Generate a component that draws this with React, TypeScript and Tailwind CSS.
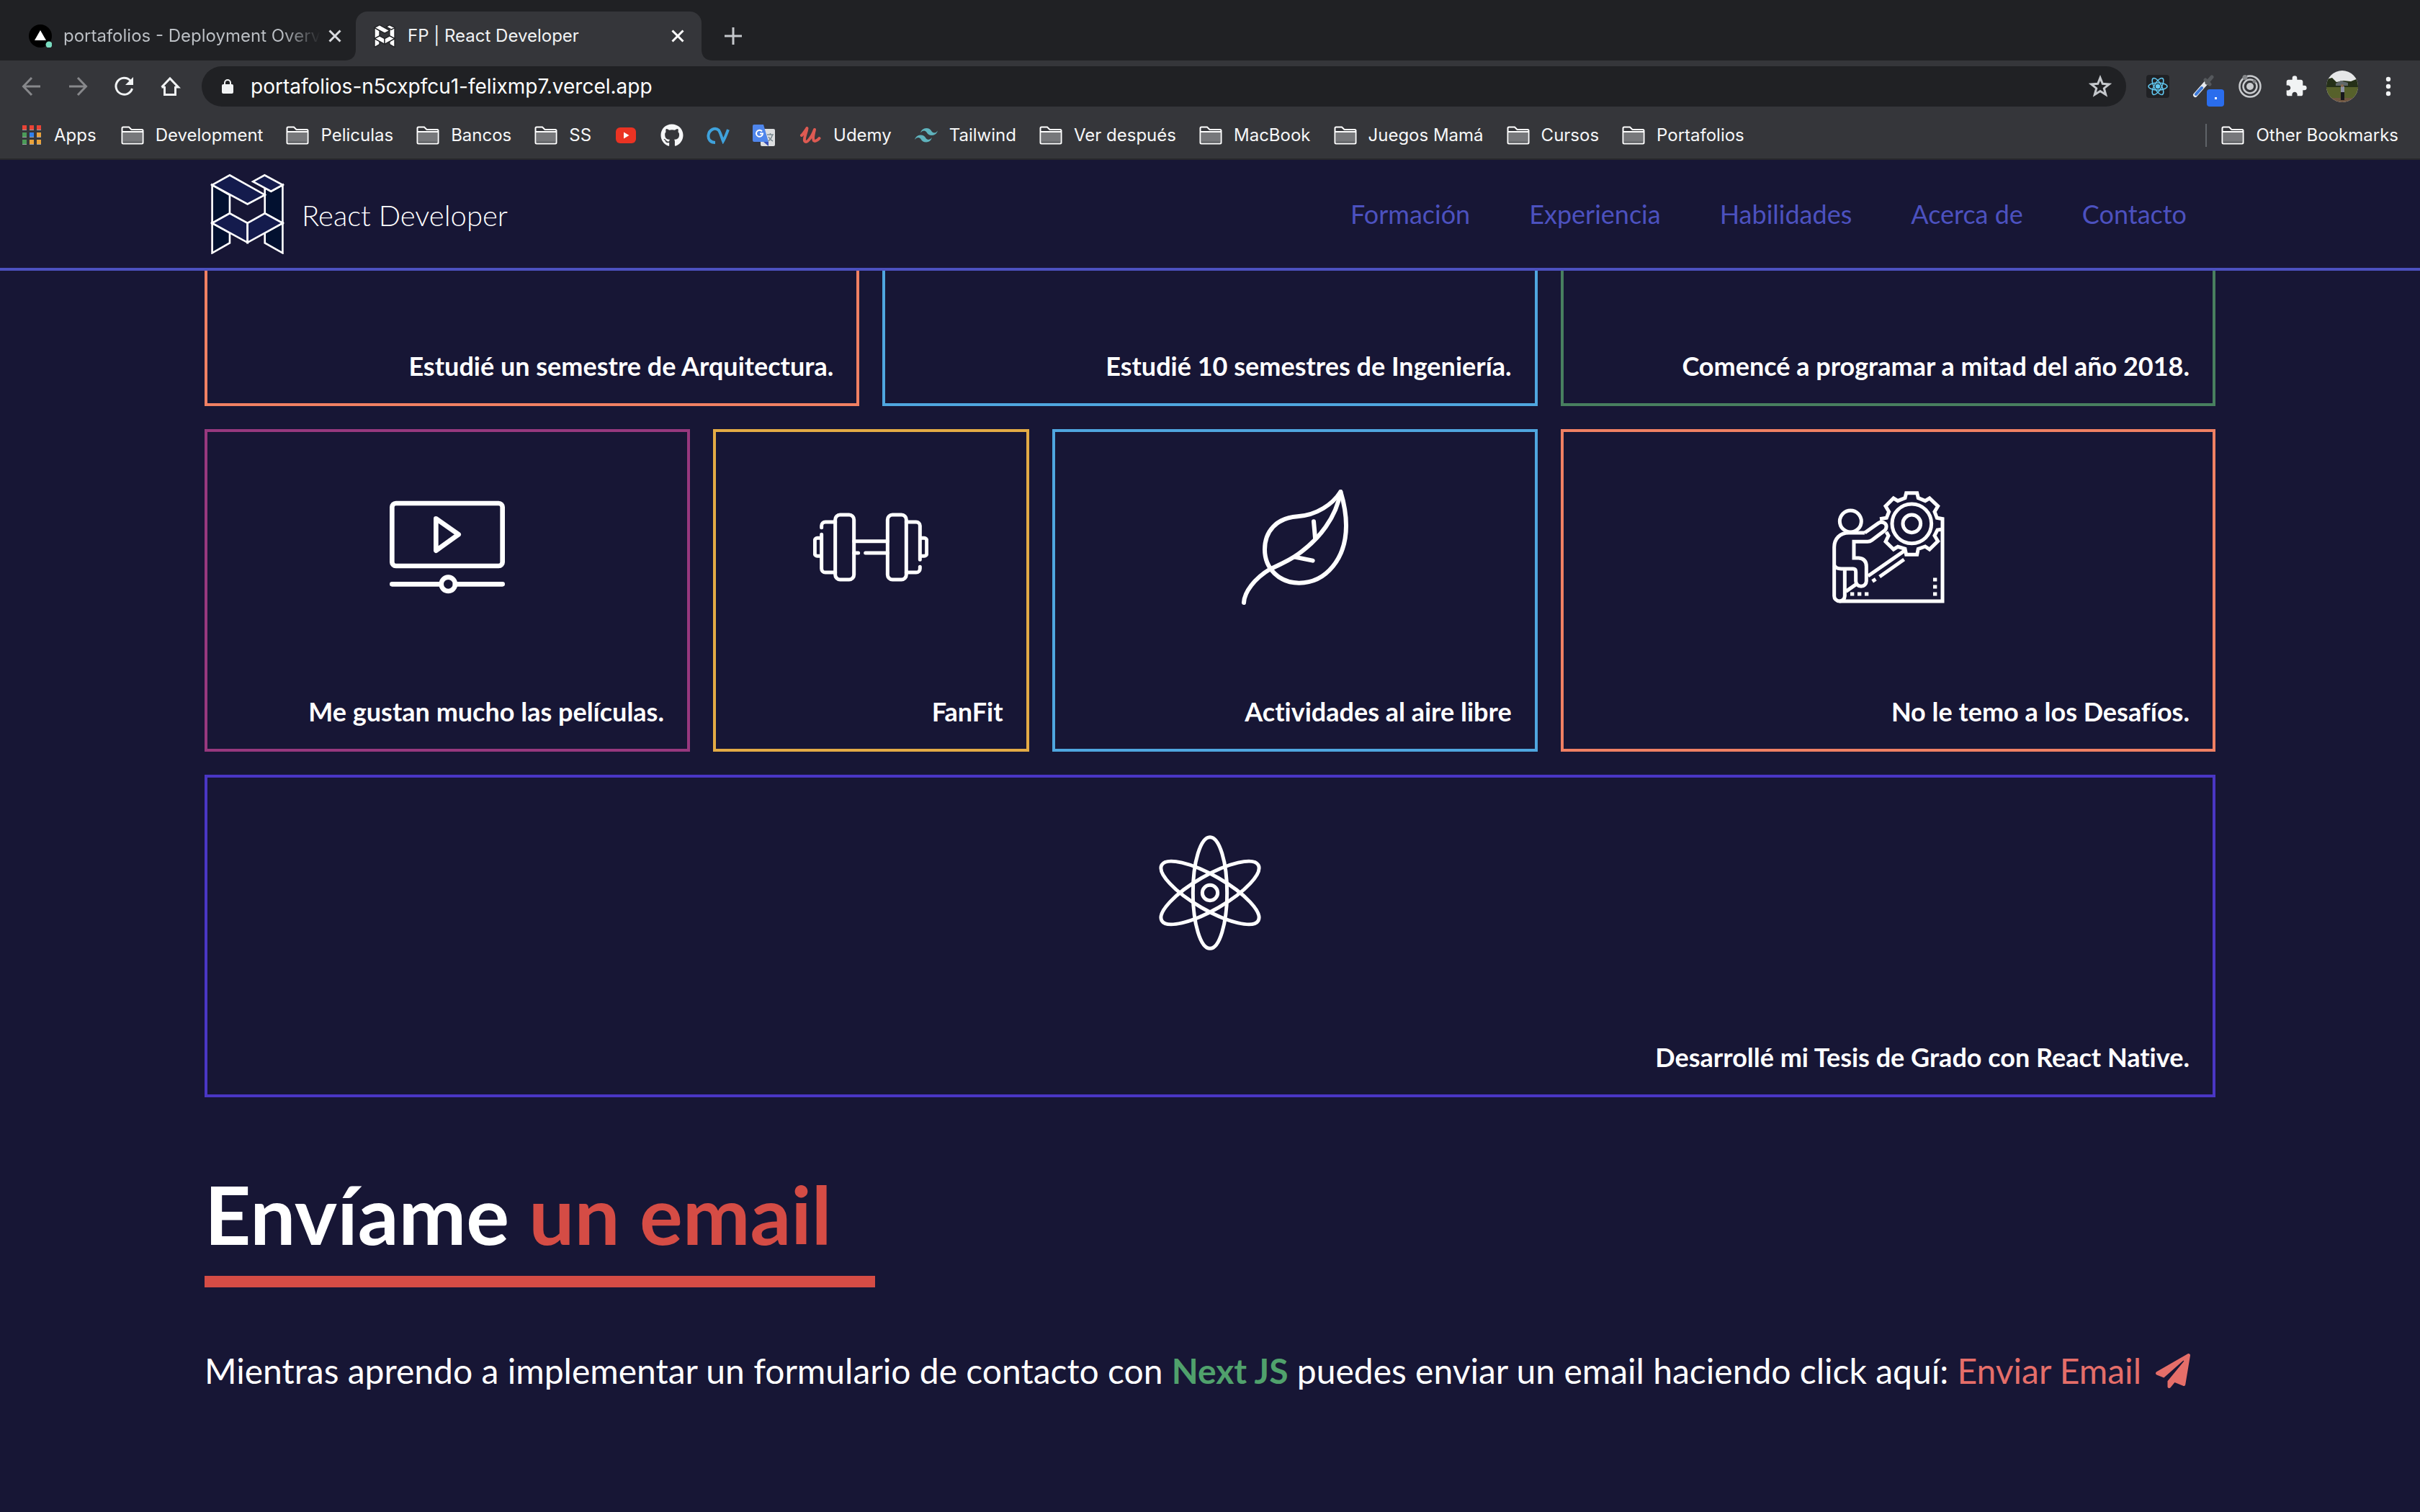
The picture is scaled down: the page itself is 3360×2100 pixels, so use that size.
import React from "react";
import { FaGithub, FaPaperPlane } from "react-icons/fa";

type IconProps = { className?: string };

function BrandMark({ className, mono = false }: IconProps & { mono?: boolean }) {
  const slab = mono ? "#ffffff" : "#141b4d";
  const pillar = mono ? "#ffffff" : "#021130";
  const line = mono ? "#202124" : "#ffffff";
  return (
    <svg viewBox="98 90 309 340" className={className} stroke={line} strokeWidth={mono ? 14 : 8} strokeLinejoin="miter" aria-hidden="true">
      <path d="M104 138L178 181V258L104 299Z" fill={pillar} />
      <path d="M326 150V258L401 299V138L352 165Z" fill={pillar} />
      <path d="M104 299L178 340V383L104 425Z" fill={pillar} />
      <path d="M401 299L326 340V383L401 425Z" fill={pillar} />
      <path d="M104 138L178 97L326 180L253 219Z" fill={slab} />
      <path d="M276 124L325 97L401 138L352 165Z" fill={slab} />
      <path d="M104 299L178 258L253 299V381Z" fill={slab} />
      <path d="M401 299L326 258L253 299V381Z" fill={slab} />
    </svg>
  );
}

function VideoIcon({ className }: IconProps) {
  return (
    <svg viewBox="120 60 480 480" className={className} fill="none" stroke="white" strokeWidth="20" strokeLinecap="round" strokeLinejoin="round" aria-hidden="true">
      <rect x="130" y="117" width="460" height="261" rx="16" />
      <path d="M313 181L407 247L313 314Z" />
      <path d="M130 454H333M393 454H590" />
      <circle cx="364" cy="454" r="29" />
    </svg>
  );
}

function DumbbellIcon({ className }: IconProps) {
  return (
    <svg viewBox="90 60 480 480" className={className} fill="none" stroke="white" strokeWidth="15" strokeLinecap="round" aria-hidden="true">
      <rect x="182" y="165" width="78" height="270" rx="20" />
      <rect x="400" y="165" width="78" height="270" rx="20" />
      <path d="M260 275H400M260 324H278M308 324H400" />
      <path d="M182 195H141a16 16 0 0 0-16 16V218M125 247V389a16 16 0 0 0 16 16H182" />
      <path d="M478 195h41a16 16 0 0 1 16 16V352M535 382V389a16 16 0 0 1-16 16H478" />
      <path d="M120 262H107a10 10 0 0 0-10 10V327a10 10 0 0 0 10 10H120" />
      <path d="M540 262H553a10 10 0 0 1 10 10V327a10 10 0 0 1-10 10H540" />
    </svg>
  );
}

function LeafIcon({ className }: IconProps) {
  return (
    <svg viewBox="84 60 480 480" className={className} fill="none" stroke="white" strokeWidth="18" strokeLinecap="round" strokeLinejoin="round" aria-hidden="true">
      <path d="M514 69C480 122 415 166 335 172C245 178 198 235 198 310C198 390 260 449 341 449C455 449 537 345 537 210C537 150 525 105 514 69Z" />
      <path d="M514 69C497 170 430 268 321 340C280 366 250 377 222 390C155 430 113 487 111 531" />
      <path d="M402 193L408 262M323 341L398 356" />
    </svg>
  );
}

function ChallengeIcon({ className }: IconProps) {
  return (
    <svg viewBox="94 60 480 480" className={className} fill="none" stroke="white" strokeWidth="15" aria-hidden="true">
      <circle cx="434" cy="202" r="82" />
      <circle cx="434" cy="202" r="37" />
      <circle cx="179" cy="192" r="45" />
      <path d="M301 182L329 178L339 152L325 129L358 96L376 107L406 95L411 74H456L461 95L490 107L508 96L543 129L529 152L539 178L562 182V525H133" />
      <path d="M558 226L541 228L529 252L543 275L508 309L490 297L461 307L456 331H411L406 307L376 298L358 309L325 277L337 252L328 236" />
      <path d="M238 240H172C135 240 111 265 111 300V503a22 22 0 0 0 44 0V392" />
      <path d="M238 240L295 200C310 189 330 200 328 216C327 226 323 230 318 233L268 271Q260 277 250 277H193V345H213Q245 348 245 380V441a22 22 0 0 1-44 0V402Q201 390 190 390H140Q118 390 111 375" />
      <path d="M160 484L203 454M252 420L406 313M300 423L402 351" />
      <path d="M270 442L284 433" />
      <path d="M178 495h16M208 495h16M238 495h16M523 435h16M523 465h16M523 495h16" />
    </svg>
  );
}

function AtomIcon({ className }: IconProps) {
  return (
    <svg viewBox="60 60 480 480" className={className} fill="none" stroke="white" strokeWidth="15" aria-hidden="true">
      <ellipse cx="300" cy="300" rx="71" ry="232" />
      <ellipse cx="300" cy="300" rx="71" ry="232" transform="rotate(60 300 300)" />
      <ellipse cx="300" cy="300" rx="71" ry="232" transform="rotate(-60 300 300)" />
      <circle cx="300" cy="300" r="32" />
    </svg>
  );
}

function CloseIcon({ className }: IconProps) {
  return (
    <svg viewBox="0 0 18 18" className={className} stroke="currentColor" strokeWidth="3" aria-hidden="true">
      <path d="M1.5 1.5L16.500 16.500M16.500 1.500L1.500 16.500" />
    </svg>
  );
}

function FolderIcon() {
  return (
    <svg viewBox="0 0 32 26" className="h-[26px] w-8 shrink-0" fill="none" aria-hidden="true">
      <path d="M3 1.500H11L14.500 5H29Q30.500 5 30.500 6.500V23Q30.500 24.500 29 24.500H3Q1.500 24.500 1.500 23V3Q1.500 1.500 3 1.500Z" fill="#35363a" stroke="white" strokeWidth="2" />
      <rect x="3" y="9" width="26" height="14" fill="#77787b" />
      <path d="M2 8H30" stroke="white" strokeWidth="2" />
      <path d="M3 22.500H29" stroke="#5f6064" strokeWidth="2" />
    </svg>
  );
}

function AppsIcon() {
  const colors = ["#e94335", "#e94335", "#e94335", "#4b9b58", "#2f80ed", "#e9a23b", "#4b9b58", "#e9a23b", "#e9a23b"];
  return (
    <svg viewBox="0 0 26 28" className="h-7 w-[26px]" aria-hidden="true">
      {colors.map((c, i) => (
        <g key={i}>
          <rect x={(i % 3) * 10} y={Math.floor(i / 3) * 10} width="6" height="7" fill={c} />
          <rect x={(i % 3) * 10} y={Math.floor(i / 3) * 10 + 6} width="6" height="1" fill="#9aa0a6" />
        </g>
      ))}
    </svg>
  );
}

function YoutubeIcon() {
  return (
    <svg viewBox="0 0 32 22" className="h-[22px] w-8" aria-hidden="true">
      <rect x="2" width="28" height="22" rx="6" fill="#ea3323" />
      <path d="M13 6.500L20.500 11L13 15.500Z" fill="white" />
    </svg>
  );
}

function WaveIcon() {
  return (
    <svg viewBox="0 0 32 24" className="h-6 w-8" fill="none" aria-hidden="true">
      <path d="M12 22C5 22 2 17 2.500 12C3.500 4 12 0 17 5C19.500 9 21 15 23 20C26 15 28 9 30 4" stroke="#3fa2dc" strokeWidth="4" />
    </svg>
  );
}

function TranslateIcon() {
  return (
    <svg viewBox="0 0 32 32" className="size-8" aria-hidden="true">
      <rect x="11" y="7" width="20" height="24" rx="2" fill="#dcdee0" />
      <path d="M15 25L22 31V25Z" fill="#3a50b5" />
      <path d="M2 1H15L22 25H2Q0 25 0 23V3Q0 1 2 1Z" fill="#4f86ec" />
      <path d="M13 10.500A4.500 4.500 0 1 0 14 13.500H10" fill="none" stroke="white" strokeWidth="2" />
      <path d="M20 15H29M24.500 13V15M27.500 15Q26 21 21.500 24M22 18Q24 22 28 24" fill="none" stroke="#7b8a90" strokeWidth="1.500" />
    </svg>
  );
}

function UdemyIcon() {
  return (
    <svg viewBox="-2 0 32 24" className="h-6 w-8" fill="none" aria-hidden="true">
      <path d="M2 12C5 9 8 4 9.500 2C9 8 5 15 6 19.500C8 25 16 15 20 4C18.500 10 17 17 19 19.500C21 21 25 18 26.500 16" stroke="#dd5a52" strokeWidth="4" strokeLinecap="round" strokeLinejoin="round" />
    </svg>
  );
}

function WindIcon() {
  return (
    <svg viewBox="0 0 32 20" className="h-5 w-8" fill="#5fb3bd" aria-hidden="true">
      <path d="M8 6.500Q10 0 16 0C24 0 22 6 27 6.500Q30 6.500 32 3.500Q30 10 24 10C16 10 18 4 13 3.500Q10 3.500 8 6.500Z" />
      <path d="M0 16Q2 9.500 8 9.500C16 9.500 14 15.500 19 16Q22 16 24 13Q22 19.500 16 19.500C8 19.500 10 13.500 5 13Q2 13 0 16Z" />
    </svg>
  );
}

type Bookmark = { label: string; icon: "folder" | "udemy" | "wind" | "youtube" | "github" | "wave" | "translate"; hideLabel?: boolean };

const bookmarks: Bookmark[] = [
  { label: "Development", icon: "folder" },
  { label: "Peliculas", icon: "folder" },
  { label: "Bancos", icon: "folder" },
  { label: "SS", icon: "folder" },
  { label: "YouTube", icon: "youtube", hideLabel: true },
  { label: "GitHub", icon: "github", hideLabel: true },
  { label: "TV", icon: "wave", hideLabel: true },
  { label: "Translate", icon: "translate", hideLabel: true },
  { label: "Udemy", icon: "udemy" },
  { label: "Tailwind", icon: "wind" },
  { label: "Ver después", icon: "folder" },
  { label: "MacBook", icon: "folder" },
  { label: "Juegos Mamá", icon: "folder" },
  { label: "Cursos", icon: "folder" },
  { label: "Portafolios", icon: "folder" },
];

function BookmarkGlyph({ icon }: { icon: Bookmark["icon"] }) {
  switch (icon) {
    case "folder":
      return <FolderIcon />;
    case "youtube":
      return <YoutubeIcon />;
    case "github":
      return <FaGithub className="size-8" />;
    case "wave":
      return <WaveIcon />;
    case "translate":
      return <TranslateIcon />;
    case "udemy":
      return <UdemyIcon />;
    case "wind":
      return <WindIcon />;
  }
}

function TabStrip() {
  return (
    <div className="flex h-[84px] items-end bg-[#202124]">
      <div className="flex h-[68px] w-[494px] items-center justify-between pr-5 pl-10">
        <button className="flex items-center gap-4 text-2xl whitespace-nowrap">
          <svg viewBox="0 0 32 32" className="size-8" aria-hidden="true">
            <circle cx="16" cy="16" r="16" fill="black" />
            <path d="M16 8L24 22H8Z" fill="white" />
            <circle cx="28" cy="28" r="4.500" fill="#79dcc0" />
          </svg>
          <span className="bg-linear-to-r from-[#bdc1c6] from-85% to-transparent bg-clip-text text-transparent">portafolios - Deployment Overv</span>
        </button>
        <button aria-label="Close tab" className="text-[#dadce0]">
          <CloseIcon className="size-[18px]" />
        </button>
      </div>
      <div className="relative flex h-[68px] w-[480px] items-center rounded-t-2xl bg-[#35363a] px-6">
        <svg viewBox="0 0 16 16" className="absolute bottom-0 -left-4 size-4" fill="#35363a" aria-hidden="true">
          <path d="M16 0V16H0Q16 16 16 0Z" />
        </svg>
        <svg viewBox="0 0 16 16" className="absolute -right-4 bottom-0 size-4" fill="#35363a" aria-hidden="true">
          <path d="M0 0V16H16Q0 16 0 0Z" />
        </svg>
        <BrandMark mono className="h-8 w-8 shrink-0" />
        <button className="ml-4 flex-1 text-left text-2xl whitespace-nowrap text-[#f1f3f4]">FP | React Developer</button>
        <button aria-label="Close tab" className="text-white">
          <CloseIcon className="size-[18px]" />
        </button>
      </div>
      <button aria-label="New tab" className="ml-8 flex h-[68px] items-center text-[#c5c8cc]">
        <svg viewBox="0 0 24 24" className="size-6" stroke="currentColor" strokeWidth="3" aria-hidden="true">
          <path d="M12 0V24M0 12H24" />
        </svg>
      </button>
    </div>
  );
}

function Toolbar() {
  return (
    <div className="flex h-[72px] items-center bg-[#35363a] px-7">
      <div className="flex gap-8">
        <button aria-label="Back" className="text-[#87888b]">
          <svg viewBox="0 0 32 32" className="size-8" fill="none" stroke="currentColor" strokeWidth="3" aria-hidden="true">
            <path d="M28 16H5M16 4L4.500 16L16 28" />
          </svg>
        </button>
        <button aria-label="Forward" className="text-[#87888b]">
          <svg viewBox="0 0 32 32" className="size-8" fill="none" stroke="currentColor" strokeWidth="3" aria-hidden="true">
            <path d="M4 16H27M16 4L27.500 16L16 28" />
          </svg>
        </button>
        <button aria-label="Reload" className="text-[#f1f3f4]">
          <svg viewBox="0 0 32 32" className="size-8" fill="none" aria-hidden="true">
            <path d="M25 8A11.500 11.500 0 1 0 27.500 19" stroke="currentColor" strokeWidth="3" />
            <path d="M29 3V14H18Z" fill="currentColor" />
          </svg>
        </button>
        <button aria-label="Home" className="text-[#f1f3f4]">
          <svg viewBox="0 0 32 32" className="size-8" fill="none" stroke="currentColor" strokeWidth="3" aria-hidden="true">
            <path d="M8.500 16V27.500H23.500V16M4.500 17L16 5L27.500 17H23M4.500 17H9" />
          </svg>
        </button>
      </div>
      <label className="ml-7 flex h-14 flex-1 items-center rounded-full bg-[#202124] pr-5 pl-7">
        <svg viewBox="0 0 16 20" className="h-5 w-4" aria-hidden="true">
          <rect y="7" width="16" height="13" rx="2" fill="#f1f3f4" />
          <path d="M4 8V5a4 4 0 0 1 8 0V8" fill="none" stroke="#f1f3f4" strokeWidth="2" />
        </svg>
        <input
          aria-label="Address"
          defaultValue="portafolios-n5cxpfcu1-felixmp7.vercel.app"
          className="ml-6 flex-1 bg-transparent text-[28px] text-white outline-none"
        />
        <svg viewBox="0 0 32 32" className="size-8" fill="none" stroke="#c5c8cc" strokeWidth="3" aria-hidden="true">
          <path d="M16 4L19.300 12.300L28.500 12.900L21.300 18.700L23.700 27.500L16 22.600L8.300 27.500L10.700 18.700L3.500 12.900L12.700 12.300Z" />
        </svg>
      </label>
      <div className="ml-7 flex items-center gap-8">
        <button aria-label="React Developer Tools" className="rounded-sm bg-[#202124]">
          <svg viewBox="0 0 32 32" className="size-8" fill="none" stroke="#61c8f0" strokeWidth="1.500" aria-hidden="true">
            <ellipse cx="16" cy="16" rx="13" ry="5" />
            <ellipse cx="16" cy="16" rx="13" ry="5" transform="rotate(60 16 16)" />
            <ellipse cx="16" cy="16" rx="13" ry="5" transform="rotate(120 16 16)" />
            <circle cx="16" cy="16" r="2.500" fill="#61c8f0" />
          </svg>
        </button>
        <button aria-label="Color picker" className="relative">
          <svg viewBox="0 0 32 32" className="size-8" aria-hidden="true">
            <path d="M4 28L19 11" stroke="#e8eaed" strokeWidth="6" strokeLinecap="round" />
            <path d="M5 27L13 18" stroke="#3b78d8" strokeWidth="4" strokeLinecap="round" />
            <path d="M18 7L24 13M20 11L27 3" stroke="#55585c" strokeWidth="5" strokeLinecap="round" />
          </svg>
          <span className="absolute top-5 left-5 flex size-6 items-center justify-center rounded bg-[#2a6ded]">
            <span className="size-[3px] bg-white" />
          </span>
        </button>
        <button aria-label="Target">
          <svg viewBox="0 0 32 32" className="size-8" fill="none" stroke="#c9cbce" aria-hidden="true">
            <circle cx="16" cy="16" r="14.500" strokeWidth="2.500" />
            <circle cx="16" cy="16" r="9.500" strokeWidth="2.500" />
            <circle cx="16" cy="16" r="5" fill="#c9cbce" stroke="none" />
            <circle cx="9" cy="3.500" r="3.500" fill="#85878a" stroke="none" />
            <circle cx="22" cy="9" r="2.500" fill="#85878a" stroke="none" />
          </svg>
        </button>
        <button aria-label="Extensions" className="text-[#f1f3f4]">
          <svg viewBox="0 0 24 24" className="size-8" fill="currentColor" aria-hidden="true">
            <path d="M20.500 11H19V7c0-1.100-.9-2-2-2h-4V3.500a2.500 2.500 0 0 0-5 0V5H4c-1.100 0-1.990.9-1.990 2v3.800H3.500c1.490 0 2.700 1.210 2.700 2.700s-1.210 2.700-2.700 2.700H2V20c0 1.100.9 2 2 2h3.800v-1.500c0-1.490 1.210-2.700 2.700-2.700s2.700 1.210 2.700 2.700V22H17c1.100 0 2-.9 2-2v-4h1.500a2.500 2.500 0 0 0 0-5z" />
          </svg>
        </button>
        <button aria-label="Profile" className="-mx-1.5 size-11 overflow-hidden rounded-full">
          <svg viewBox="0 0 44 44" className="size-11" aria-hidden="true">
            <rect width="44" height="44" fill="#e6e7e8" />
            <path d="M0 12L8 10L14 16L24 14L34 15L44 11V26H0Z" fill="#253018" />
            <path d="M13 18L20 14L30 17V21H13Z" fill="#60686a" />
            <rect y="23" width="44" height="16" fill="#57612b" />
            <rect y="38" width="44" height="6" fill="#6f5640" />
            <rect x="20" y="22" width="5" height="9" fill="#8e93a6" />
            <rect x="20" y="30" width="5" height="11" fill="#17171c" />
            <circle cx="22" cy="21" r="2" fill="#8a6a50" />
          </svg>
        </button>
        <button aria-label="Menu" className="text-[#f1f3f4]">
          <svg viewBox="0 0 32 32" className="size-8" fill="currentColor" aria-hidden="true">
            <circle cx="16" cy="6" r="3.200" />
            <circle cx="16" cy="16" r="3.200" />
            <circle cx="16" cy="26" r="3.200" />
          </svg>
        </button>
      </div>
    </div>
  );
}

function BookmarksBar() {
  return (
    <div className="flex h-[66px] items-center border-b-2 border-[#28292b] bg-[#35363a] pr-[30px] pl-[31px] text-2xl whitespace-nowrap text-[#f6f7f8]">
      <button className="flex items-center gap-[18px]">
        <AppsIcon />
        Apps
      </button>
      <div className="ml-[34px] flex items-center gap-8">
        {bookmarks.map((b) => (
          <button key={b.label} aria-label={b.label} className="flex items-center gap-4">
            <BookmarkGlyph icon={b.icon} />
            {!b.hideLabel && b.label}
          </button>
        ))}
      </div>
      <div className="ml-auto flex items-center">
        <span className="mr-5 h-8 w-0.5 bg-[#5f6368]" />
        <button className="flex items-center gap-4">
          <FolderIcon />
          Other Bookmarks
        </button>
      </div>
    </div>
  );
}

const navLinks = ["Formación", "Experiencia", "Habilidades", "Acerca de", "Contacto"];

function SiteHeader() {
  return (
    <header className="flex items-center justify-between border-b-4 border-[#4c51bf] py-[19px] pr-[324px] pl-[292px]">
      <a href="#" className="flex items-center gap-6 text-[40px] font-light text-white">
        <BrandMark className="h-28 w-[103px]" />
        <span className="pt-1">React Developer</span>
      </a>
      <nav className="flex gap-[82px] text-4xl text-[#4c51bf]">
        {navLinks.map((label) => (
          <a key={label} href="#">
            {label}
          </a>
        ))}
      </nav>
    </header>
  );
}

type Card = { text: string; frame: string; Icon: (p: IconProps) => React.JSX.Element };

const introCards = [
  { text: "Estudié un semestre de Arquitectura.", frame: "border-[#f08063]" },
  { text: "Estudié 10 semestres de Ingeniería.", frame: "border-[#4fa6df]" },
  { text: "Comencé a programar a mitad del año 2018.", frame: "border-[#487f5f]" },
];

const cards: Card[] = [
  { text: "Me gustan mucho las películas.", frame: "col-span-3 border-[#97387e]", Icon: VideoIcon },
  { text: "FanFit", frame: "col-span-2 border-[#e3ab45]", Icon: DumbbellIcon },
  { text: "Actividades al aire libre", frame: "col-span-3 border-[#4fa6df]", Icon: LeafIcon },
  { text: "No le temo a los Desafíos.", frame: "col-span-4 border-[#f08063]", Icon: ChallengeIcon },
  { text: "Desarrollé mi Tesis de Grado con React Native.", frame: "col-span-12 border-[#4a36c4]", Icon: AtomIcon },
];

export default function App() {
  return (
    <div className="flex min-h-screen flex-col bg-[#171635] font-['Inter',sans-serif]">
      <TabStrip />
      <Toolbar />
      <BookmarksBar />
      <div className="font-['Lato',sans-serif] text-white [font-variant-ligatures:none]">
        <SiteHeader />
        <main className="px-[284px]">
          <section className="grid grid-cols-12 gap-8 text-right text-4xl font-bold">
            {introCards.map((c) => (
              <article key={c.text} className={`col-span-4 flex h-[188px] flex-col justify-end border-4 border-t-0 px-8 pb-8 ${c.frame}`}>
                <h3>{c.text}</h3>
              </article>
            ))}
            {cards.map(({ text, frame, Icon }) => (
              <article key={text} className={`flex h-[448px] flex-col justify-between border-4 px-8 pt-20 pb-8 ${frame}`}>
                <Icon className="size-40 self-center" />
                <h3>{text}</h3>
              </article>
            ))}
          </section>
          <section className="pt-24">
            <h2 className="text-[112px] leading-[132px] font-bold">
              Envíame <span className="text-[#d54c45]">un email</span>
            </h2>
            <div className="mt-5 h-4 w-1/3 bg-[#d54c45]" />
            <p className="mt-20 text-5xl leading-[72px]">
              Mientras aprendo a implementar un formulario de contacto con <strong className="font-bold text-[#50a16c]">Next JS</strong> puedes enviar un email
              haciendo click aquí:{" "}
              <a href="mailto:" className="text-[#e56e69]">
                Enviar Email <FaPaperPlane className="ml-2 inline size-12 align-[-6px]" />
              </a>
            </p>
          </section>
        </main>
      </div>
    </div>
  );
}
